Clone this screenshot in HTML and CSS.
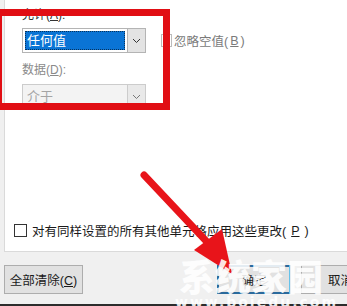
FILE: index.html
```html
<!DOCTYPE html>
<html lang="zh-CN">
<head>
<meta charset="UTF-8">
<title>数据验证</title>
<link rel="stylesheet" href="styles.css">
</head>
<body>
<div class="dialog">
  <div class="panel">
    <div class="field">
      <div class="label">允许(<u>A</u>):</div>
      <div class="row">
        <div class="select">
          <span class="value active">任何值</span>
          <span class="drop"><svg width="9" height="6" viewBox="0 0 9 6"><path d="M1 1l3.5 3.5L8 1" fill="none" stroke="#333" stroke-width="1"/></svg></span>
        </div>
        <label class="check disabled"><span class="box"></span>忽略空值(<u>B</u>)</label>
      </div>
    </div>
    <div class="field">
      <div class="label disabled">数据(<u>D</u>):</div>
      <div class="select off">
        <span class="value">介于</span>
        <span class="drop"><svg width="9" height="6" viewBox="0 0 9 6"><path d="M1 1l3.5 3.5L8 1" fill="none" stroke="#777" stroke-width="1"/></svg></span>
      </div>
    </div>
    <label class="check apply"><span class="box"></span>对有同样设置的所有其他单元格应用这些更改(<u>P</u>)</label>
  </div>
  <div class="footer">
    <button class="btn">全部清除(<u>C</u>)</button>
    <div class="right">
      <button class="btn primary">确定</button>
      <button class="btn">取消</button>
    </div>
  </div>
  <div class="bottom-line"></div>

  <div class="mark-box"></div>
  <svg class="arrow" width="347" height="306" viewBox="0 0 347 306">
    <line x1="144" y1="175" x2="208" y2="243" stroke="#e8141a" stroke-width="7" stroke-linecap="round"/>
    <polygon points="194,250 222,229 232,274" fill="#e8141a"/>
  </svg>
  <div class="watermark">
    <div class="wm-big">系统家园</div>
    <div class="wm-url">www.bojedu.com</div>
  </div>
</div>
</body>
</html>
```

FILE: styles.css
```css
html, body {
  margin: 0;
  padding: 0;
}
body {
  background: #f0f0f0;
  font-family: "Liberation Sans", "Noto Sans CJK SC", sans-serif;
  font-size: 12px;
  color: #1a1a1a;
}
u {
  text-decoration: underline;
  text-underline-offset: 1px;
}
.dialog {
  position: relative;
  width: 347px;
  height: 306px;
  overflow: hidden;
}
.panel {
  margin-left: 4px;
  height: 252px;
  background: #fff;
  border-left: 1px solid #dadada;
  border-bottom: 1px solid #dadada;
  box-sizing: border-box;
  padding: 7px 0 0 17px;
}
.field {
  display: flex;
  flex-direction: column;
}
.label {
  height: 17px;
  line-height: 17px;
  color: #333;
  margin-bottom: 4px;
}
.label.disabled {
  color: #8a8a8a;
  margin-top: 9px;
  margin-bottom: 5px;
}
.row {
  display: flex;
  align-items: center;
}
.select {
  width: 124px;
  height: 25px;
  box-sizing: border-box;
  border: 1px solid #b4b4b4;
  background: #fff;
  display: flex;
  padding: 2px 0 2px 2px;
}
.select .value {
  flex: 1;
  line-height: 19px;
  padding-left: 2px;
  font-size: 13px;
}
.select .value.active {
  background: #0a74d5;
  color: #fff;
  outline: 1px dotted #08325a;
  outline-offset: -1px;
}
.select .drop {
  width: 17px;
  margin: -2px 0 -2px 2px;
  background: #e3e3e3;
  border-left: 1px solid #b4b4b4;
  display: flex;
  align-items: center;
  justify-content: center;
}
.select.off {
  background: #f3f3f3;
  border-color: #cccccc;
}
.select.off .value {
  color: #a4a4a4;
}
.select.off .drop {
  background: #e9e9e9;
  border-color: #cccccc;
}
.check {
  display: flex;
  align-items: center;
  gap: 4px;
  font-size: 12.5px;
}
.check .box {
  width: 11px;
  height: 11px;
  border: 1px solid #333;
  background: #fff;
}
.check.disabled {
  margin-left: 15px;
  gap: 2px;
  color: #7a7a7a;
}
.check.disabled .box {
  width: 9px;
  border-color: #bcbcbc;
}
.check.apply {
  margin: 112px 0 0 -8px;
  gap: 5px;
}
.footer {
  display: flex;
  justify-content: space-between;
  padding: 13px 0 0 4px;
}
.right {
  display: flex;
  gap: 10px;
  margin-right: -33px;
}
.btn {
  width: 79px;
  height: 29px;
  font-family: inherit;
  font-size: 12.5px;
  background: #e1e1e1;
  border: 1px solid #adadad;
  color: #1a1a1a;
  padding: 0;
}
.btn.primary {
  width: 74px;
  border: 2px solid #2a6a9c;
}
.bottom-line {
  position: absolute;
  left: 0;
  right: 0;
  bottom: 0;
  height: 2px;
  background: #2c2c2c;
}
.mark-box {
  position: absolute;
  left: -5px;
  top: 9px;
  width: 161px;
  height: 87px;
  border: 7px solid #e10e14;
}
.arrow {
  position: absolute;
  left: 0;
  top: 0;
}
.watermark {
  position: absolute;
  left: 175px;
  top: 255px;
  width: 152px;
  color: rgba(255, 255, 255, 0.88);
  text-align: center;
}
.wm-big {
  font-family: "Noto Sans CJK SC", sans-serif;
  font-size: 36px;
  font-weight: 900;
  line-height: 40px;
  white-space: nowrap;
}
.wm-url {
  font-family: "DejaVu Sans", sans-serif;
  font-size: 14px;
  font-weight: bold;
  letter-spacing: 2px;
  line-height: 14px;
  white-space: nowrap;
}
```
